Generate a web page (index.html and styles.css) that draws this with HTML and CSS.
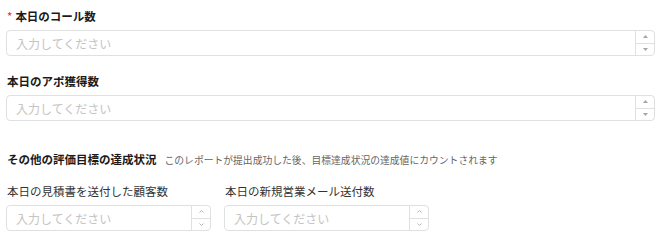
FILE: index.html
```html
<!DOCTYPE html>
<html lang="ja">
  <head>
    <meta charset="utf-8" />
    <title>日報</title>
    <link rel="stylesheet" href="styles.css">
  </head>
  <body>
    <form class="report-form">
      <div class="form-item">
        <label class="item-label bold"><span class="required">*</span>本日のコール数</label>
        <div class="number-input">
          <input type="text" class="number-field" placeholder="入力してください" />
          <div class="spinner">
            <span class="spin-btn"><svg width="5" height="3" viewBox="0 0 5 3"><path d="M0 3 L2.5 0 L5 3 Z" fill="#a6a6a6"/></svg></span>
            <span class="spin-btn"><svg width="5" height="3" viewBox="0 0 5 3"><path d="M0 0 L2.5 3 L5 0 Z" fill="#a6a6a6"/></svg></span>
          </div>
        </div>
      </div>

      <div class="form-item">
        <label class="item-label bold">本日のアポ獲得数</label>
        <div class="number-input">
          <input type="text" class="number-field" placeholder="入力してください" />
          <div class="spinner">
            <span class="spin-btn"><svg width="5" height="3" viewBox="0 0 5 3"><path d="M0 3 L2.5 0 L5 3 Z" fill="#a6a6a6"/></svg></span>
            <span class="spin-btn"><svg width="5" height="3" viewBox="0 0 5 3"><path d="M0 0 L2.5 3 L5 0 Z" fill="#a6a6a6"/></svg></span>
          </div>
        </div>
      </div>

      <div class="section-title">
        <span class="bold">その他の評価目標の達成状況</span>
        <span class="section-note">このレポートが提出成功した後、目標達成状況の達成値にカウントされます</span>
      </div>

      <div class="goal-row">
        <div class="goal-item">
          <label class="item-label">本日の見積書を送付した顧客数</label>
          <div class="number-input">
            <input type="text" class="number-field" placeholder="入力してください" />
            <div class="spinner">
              <span class="spin-btn"><svg width="5" height="3" viewBox="0 0 5 3"><path d="M0.5 2.5 L2.5 0.5 L4.5 2.5" fill="none" stroke="#a6a6a6" stroke-width="0.8"/></svg></span>
              <span class="spin-btn"><svg width="5" height="3" viewBox="0 0 5 3"><path d="M0.5 0.5 L2.5 2.5 L4.5 0.5" fill="none" stroke="#a6a6a6" stroke-width="0.8"/></svg></span>
            </div>
          </div>
        </div>
        <div class="goal-item">
          <label class="item-label">本日の新規営業メール送付数</label>
          <div class="number-input">
            <input type="text" class="number-field" placeholder="入力してください" />
            <div class="spinner">
              <span class="spin-btn"><svg width="5" height="3" viewBox="0 0 5 3"><path d="M0.5 2.5 L2.5 0.5 L4.5 2.5" fill="none" stroke="#a6a6a6" stroke-width="0.8"/></svg></span>
              <span class="spin-btn"><svg width="5" height="3" viewBox="0 0 5 3"><path d="M0.5 0.5 L2.5 2.5 L4.5 0.5" fill="none" stroke="#a6a6a6" stroke-width="0.8"/></svg></span>
            </div>
          </div>
        </div>
      </div>
    </form>
  </body>
</html>
```

FILE: styles.css
```css
html,
body {
  margin: 0;
  padding: 0;
  background: #ffffff;
  font-family: "Noto Sans CJK JP", "Noto Sans", sans-serif;
  font-size: 11.5px;
  color: #262626;
  -webkit-font-smoothing: antialiased;
}

.report-form {
  display: flex;
  flex-direction: column;
  padding: 6px 15px 0 6px;
}

.form-item {
  display: flex;
  flex-direction: column;
  margin-bottom: 15px;
}

.item-label {
  display: block;
  height: 20px;
  line-height: 20px;
  margin-bottom: 4px;
  padding-left: 1px;
  color: #333333;
}

.bold {
  font-weight: 700;
  color: #1a1a1a;
}

.required {
  color: #f5222d;
  font-weight: 400;
  margin-right: 3px;
}

.number-input {
  display: flex;
  height: 26px;
  box-sizing: border-box;
  border: 1px solid #e0e0e0;
  border-radius: 4px;
  background: #ffffff;
  overflow: hidden;
}

.number-field {
  flex: 1;
  min-width: 0;
  border: none;
  outline: none;
  padding: 0 9px;
  font-family: inherit;
  font-size: 12px;
  color: #262626;
  background: transparent;
}

.number-field::placeholder {
  color: #c4c4c4;
}

.spinner {
  display: flex;
  flex-direction: column;
  width: 18px;
  border-left: 1px solid #e0e0e0;
}

.spin-btn {
  flex: 1;
  display: flex;
  align-items: center;
  justify-content: center;
}

.spin-btn + .spin-btn {
  border-top: 1px solid #e0e0e0;
}

.section-title {
  display: flex;
  align-items: baseline;
  height: 20px;
  line-height: 20px;
  margin-top: 13px;
  padding-left: 1px;
}

.section-note {
  font-size: 9.8px;
  color: #666666;
  margin-left: 8px;
}

.goal-row {
  display: flex;
  gap: 13px;
  margin-top: 12px;
}

.goal-item {
  display: flex;
  flex-direction: column;
  width: 205px;
}
```
